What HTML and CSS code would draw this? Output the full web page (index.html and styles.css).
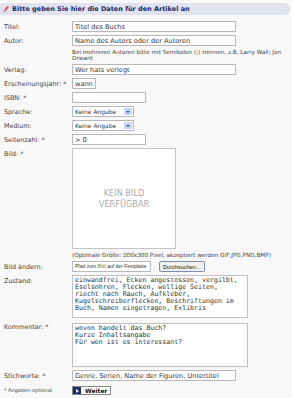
FILE: index.html
```html
<!DOCTYPE html>
<html lang="de">
<head>
  <meta charset="UTF-8">
  <title>Artikel einstellen</title>
  <link rel="stylesheet" href="styles.css">
</head>
<body>
  <div class="head">
    <svg class="head-icon" width="6" height="7" viewBox="0 0 6 7"><path d="M0 7 L1 4 L4 0 L6 1 L3 5 Z" fill="#d8566a"/><path d="M0 7 L1 4 L3 5 Z" fill="#f3c0c8"/></svg>
    <span>Bitte geben Sie hier die Daten für den Artikel an</span>
  </div>

  <form class="form">
    <label class="lbl">Titel:</label>
    <input class="txt wide" type="text" value="Titel des Buchs">

    <label class="lbl">Autor:</label>
    <input class="txt wide" type="text" value="Name des Autors oder der Autoren">

    <div class="hint">Bei mehreren Autoren bitte mit Semikolon (;) trennen, z.B. Larry Wall; Jon Orwant</div>

    <label class="lbl">Verlag:</label>
    <input class="txt wide" type="text" value="Wer hats verlegt">

    <label class="lbl">Erscheinungsjahr: *</label>
    <input class="txt year" type="text" value="wann">

    <label class="lbl">ISBN: *</label>
    <input class="txt mid" type="text" value="">

    <label class="lbl">Sprache:</label>
    <div class="sel"><span>Keine Angabe</span><span class="arrow"></span></div>

    <label class="lbl">Medium:</label>
    <div class="sel"><span>Keine Angabe</span><span class="arrow"></span></div>

    <label class="lbl">Seitenzahl: *</label>
    <input class="txt mid" type="text" value="&gt; 0">

    <label class="lbl top">Bild: *</label>
    <div class="pic"><span>KEIN BILD<br>VERFÜGBAR</span></div>

    <div class="hint one">(Optimale Größe: 200x300 Pixel, akzeptiert werden GIF,JPG,PNG,BMP)</div>

    <label class="lbl">Bild ändern:</label>
    <div class="file">
      <span class="path">Pfad zum <b>Bild</b> auf der Festplatte</span>
      <button type="button" class="browse">Durchsuchen...</button>
    </div>

    <label class="lbl top">Zustand:</label>
    <textarea class="area zustand">einwandfrei, Ecken angestossen, vergilbt,
Eselsohren, Flecken, wellige Seiten,
riecht nach Rauch, Aufkleber,
Kugelschreiberflecken, Beschriftungen im
Buch, Namen eingetragen, Exlibris</textarea>

    <label class="lbl top">Kommentar: *</label>
    <textarea class="area komm">wovon handelt das Buch?
Kurze Inhaltsangabe
Für wen ist es interessant?</textarea>

    <label class="lbl">Stichworte: *</label>
    <input class="txt wide" type="text" value="Genre, Serien, Name der Figuren, Untertitel">

    <div class="note">* Angaben optional</div>
    <button type="button" class="next"><span class="play"></span>Weiter</button>
  </form>
</body>
</html>
```

FILE: styles.css
```css
body {
  margin: 0;
  background-color: #f8f8f8;
  font-family: "DejaVu Sans", Verdana, sans-serif;
  font-size: 6.4px;
  color: #333;
}

.head {
  display: flex;
  align-items: center;
  gap: 3px;
  height: 12px;
  margin: 3px 2px 0 0;
  padding-left: 3px;
  background-color: #e0e2ef;
  border-radius: 0 7px 7px 0;
  color: #1b2a66;
  font-weight: bold;
  font-size: 6.5px;
}

.form {
  display: grid;
  grid-template-columns: 68px 1fr;
  align-items: center;
  row-gap: 3px;
  padding: 6px 0 0 4px;
}

.lbl {
  color: #444;
}
.lbl.top {
  align-self: start;
  padding-top: 2px;
}

.txt {
  box-sizing: border-box;
  height: 11px;
  padding: 0 2px;
  border: 1px solid #b8b8b8;
  background: #fff;
  font-family: "DejaVu Sans", Verdana, sans-serif;
  font-size: 6.6px;
  color: #333;
}
.wide { width: 164px; }
.mid { width: 74px; }
.year { width: 24px; }

.hint {
  grid-column: 2;
  padding-right: 2px;
  font-size: 5.7px;
  line-height: 6px;
  color: #444;
}

.sel {
  box-sizing: border-box;
  display: flex;
  align-items: center;
  justify-content: space-between;
  width: 62px;
  height: 11px;
  padding: 0 1px 0 2px;
  border: 1px solid #b8b8b8;
  background: #fff;
  font-size: 6px;
  color: #333;
}
.arrow {
  width: 8px;
  height: 7px;
  border-radius: 1px;
  background: #c9d5f2;
  position: relative;
}
.arrow::after {
  content: "";
  position: absolute;
  left: 2px;
  top: 2.5px;
  border-left: 2px solid transparent;
  border-right: 2px solid transparent;
  border-top: 2px solid #3a4f9a;
}

.pic {
  box-sizing: border-box;
  width: 104px;
  height: 101px;
  display: flex;
  align-items: center;
  justify-content: center;
  text-align: center;
  border: 1px solid #c4c4c4;
  background: #fff;
  color: #aaa;
  font-size: 8.2px;
  line-height: 11px;
}

.file {
  display: flex;
  align-items: center;
  gap: 8px;
}
.path {
  box-sizing: border-box;
  width: 79px;
  height: 11px;
  padding: 0 2px;
  border: 1px solid #b8b8b8;
  background: #fff;
  font-family: "Liberation Sans", Arial, sans-serif;
  font-size: 5px;
  line-height: 9px;
  white-space: nowrap;
  overflow: hidden;
  color: #333;
}
.path b {
  font-weight: normal;
  color: #6a7a10;
}
.browse {
  box-sizing: border-box;
  height: 11px;
  padding: 0 3px;
  border: 1px solid #7f8db8;
  border-radius: 2px;
  background: #f0f0ea;
  font-family: "Liberation Sans", Arial, sans-serif;
  font-size: 5.6px;
  color: #222;
}

.area {
  box-sizing: border-box;
  width: 176px;
  padding: 1px 2px;
  border: 1px solid #c0c0c0;
  background: #fff;
  font-family: "DejaVu Sans Mono", monospace;
  font-size: 6.6px;
  line-height: 7px;
  color: #333;
  resize: none;
  overflow: hidden;
}
.zustand { height: 43px; }
.komm { height: 44px; margin-top: 2px; }

.note {
  font-size: 5px;
  color: #444;
}
.next {
  justify-self: start;
  display: flex;
  align-items: center;
  gap: 4px;
  height: 9px;
  padding: 0 3px 0 0;
  border: 1px solid #888;
  background: #fff;
  font-family: "DejaVu Sans", Verdana, sans-serif;
  font-weight: bold;
  font-size: 6px;
  color: #111;
  margin-top: 2px;
}
.play {
  width: 8px;
  height: 7px;
  background: #1d2a6a;
  position: relative;
}
.play::after {
  content: "";
  position: absolute;
  left: 3px;
  top: 1.5px;
  border-top: 2px solid transparent;
  border-bottom: 2px solid transparent;
  border-left: 3px solid #fff;
}
```
